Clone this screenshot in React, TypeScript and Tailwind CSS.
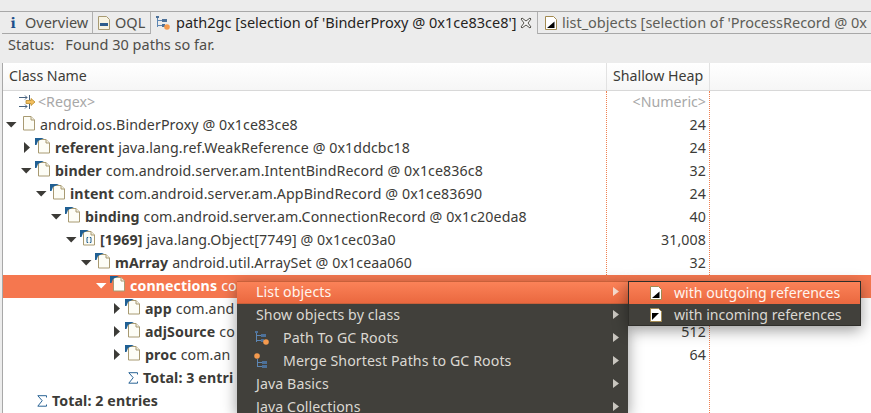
const font = { fontFamily: '"Noto Sans", sans-serif' };

type Kind = 'ref' | 'plain' | 'array' | 'sum';

function Doc({ kind }: { kind: Kind }) {
  return (
    <svg width="16" height="16" viewBox="0 0 16 16" className="shrink-0">
      <path d="M3.5 1.5h7.5l3.5 3.5v10h-11z" fill="#fdfdf6" stroke="#a89a72" strokeWidth="1" />
      <path d="M11 1.5V5h3.5" fill="#f2efe0" stroke="#a89a72" strokeWidth="1" />
      {kind === 'ref' && <path d="M0 0h9L3 3 1.5 7H0z" fill="#1f5f93" />}
      {kind === 'array' && (
        <>
          <path d="M0 0h9L3 3 1.5 7H0z" fill="#1f5f93" />
          <path d="M7 7.5v5M7 7.5h1.2M7 12.5h1.2M11 7.5v5M11 7.5H9.8M11 12.5H9.8" stroke="#1f5f93" strokeWidth="1" fill="none" />
        </>
      )}
    </svg>
  );
}

function Twisty({ open, white }: { open?: boolean; white?: boolean }) {
  return (
    <svg width="11" height="11" viewBox="0 0 11 11" className="shrink-0">
      {open ? (
        <path d="M0 3h10.5L5.2 8.5z" fill={white ? '#fff' : '#3c3b37'} />
      ) : (
        <path d="M3 0l6 5.5L3 11z" fill="#3c3b37" />
      )}
    </svg>
  );
}

function Sigma() {
  return (
    <svg width="10" height="12" viewBox="0 0 10 12" className="shrink-0">
      <path d="M9.5 2.5V.7H.8l4.4 5-4.4 5.5h8.7V9.5" fill="none" stroke="#2a6496" strokeWidth="1" />
    </svg>
  );
}

function Row({
  indent, open, leaf, kind, bold, rest, value, selected, clip,
}: {
  indent: number; open?: boolean; leaf?: boolean; kind: Kind; bold: string; rest?: string; value?: string; selected?: boolean; clip?: boolean;
}) {
  return (
    <div className={`flex h-[23px] items-center pb-[2px] text-[14.2px] tracking-[0.1px] ${selected ? 'bg-[#f5774f] text-white' : 'text-[#3c3b37]'}`}>
      <div className="flex w-[604px] shrink-0">
        <div className={`flex items-center overflow-hidden whitespace-nowrap ${clip ? 'w-[234px]' : 'w-[604px]'}`} style={{ paddingLeft: indent }}>
          {!leaf && <Twisty open={open} white={selected} />}
          {kind === 'sum' ? (
            <span className="ml-[3px] mr-[5px]"><Sigma /></span>
          ) : (
            <span className="-mt-[3px] ml-[3px] mr-[4px]"><Doc kind={kind} /></span>
          )}
          {bold && <span className="mr-[4px] font-bold">{bold}</span>}
          {rest && <span>{rest}</span>}
        </div>
      </div>
      <div className="w-[103px] pr-[4px] text-right">{value}</div>
    </div>
  );
}

function Tab({ icon, label, w, active, close, pad, gap }: { icon: React.ReactNode; label: string; w: string; active?: boolean; close?: boolean; pad: string; gap: string }) {
  return (
    <div className={`${w} ${pad} ${gap} flex h-[22px] shrink-0 items-center overflow-hidden whitespace-nowrap border-r border-[#b0b0b0] text-[14.5px] ${active ? 'text-[#26241e]' : 'border-b border-b-[#a8a8a8]'}`}>
      {icon}
      <span>{label}</span>
      {close && (
        <svg width="12" height="12" viewBox="0 0 12 12" className="shrink-0">
          <path d="M2 1l4 3 4-3 1 1-3 4 3 4-1 1-4-3-4 3-1-1 3-4-3-4z" fill="#f7f7f7" stroke="#55534d" strokeWidth="1" />
        </svg>
      )}
    </div>
  );
}

function TreeIcon({ merge }: { merge?: boolean }) {
  return (
    <svg width="16" height="16" viewBox="0 0 16 16" className="shrink-0">
      <path d={merge ? 'M3.5 6v8M3.5 9.5H8M3.5 13.5H8' : 'M2.5 2v10M2.5 5.5H8M2.5 10.5H8'} stroke="#5d86b3" strokeWidth="1" fill="none" />
      <path d={merge ? 'M8 8h5v3H8zM8 12h5v3H8z' : 'M1 1h3v2H1zM7 4h5v3H7zM7 9h3v3H7z'} fill="#4d7199" />
      <circle cx={merge ? 3 : 12} cy={merge ? 3 : 12} r="2.8" fill="#f49a4e" />
    </svg>
  );
}

function MenuDocIcon({ incoming }: { incoming?: boolean }) {
  return (
    <svg width="12" height="14" viewBox="0 0 12 14" className="shrink-0">
      <path d="M.5.5h8l3 3v10H.5z" fill="#fff" stroke="#a38a50" strokeWidth="1" />
      <path d={incoming ? 'M2 5h7L2 12z' : 'M9.5 5.5v6.5H2z'} fill="#000" />
    </svg>
  );
}

function MenuItem({ label, icon, active }: { label: string; icon?: React.ReactNode; active?: boolean }) {
  return (
    <div className={`flex h-[23px] shrink-0 items-center whitespace-nowrap pb-[2px] pl-[19px] text-[14.2px] tracking-[0.08px] ${active ? 'border-y border-[#c8603a] bg-gradient-to-b from-[#fb8258] to-[#ea683f] text-[#fff4ee]' : 'text-[#dbd8d2]'}`}>
      {icon && <span className="-ml-[2px] mr-[13px] flex w-[16px]">{icon}</span>}
      <span>{label}</span>
      <svg width="6" height="9" viewBox="0 0 6 9" className="ml-auto mr-[9px] shrink-0">
        <path d="M0 0l6 4.5L0 9z" fill={active ? '#f6d9cc' : '#c9c6bf'} />
      </svg>
    </div>
  );
}

function SubItem({ label, active, incoming }: { label: string; active?: boolean; incoming?: boolean }) {
  return (
    <div className={`flex h-[22px] items-center whitespace-nowrap pb-[1px] pl-[21px] text-[14.1px] ${active ? 'bg-gradient-to-b from-[#fb8258] to-[#ea683f] text-[#fff4ee]' : 'text-[#dbd8d2]'}`}>
      <span className="mr-[12px] flex"><MenuDocIcon incoming={incoming} /></span>
      <span>{label}</span>
    </div>
  );
}

export default function App() {
  return (
    <div className="relative h-[413px] w-[871px] overflow-hidden bg-[#ececec]" style={font}>
      <div className="box-content h-[11px] border-b border-[#a8a8a8]" />
      <div className="flex h-[22px] items-start pl-[2px] text-[#4f4e49]">
        <Tab w="w-[91px]" pad="pl-[4px]" gap="gap-[5px]" label="Overview" icon={<span className="w-[14px] text-center font-serif text-[17px] font-bold leading-none text-[#1e4f8b]">i</span>} />
        <Tab w="w-[58px]" pad="pl-[3px]" gap="gap-[3px]" label="OQL" icon={
          <svg width="16" height="16" viewBox="0 0 16 16" className="shrink-0">
            <path d="M2.5 1.5h8l3 3v10h-11z" fill="#f7f3e2" stroke="#a89a72" />
            <path d="M4 8h8v3H4z" fill="#2d5c8c" />
          </svg>} />
        <Tab w="w-[387px]" active close pad="pl-[4px]" gap="gap-[3px]" label="path2gc [selection of 'BinderProxy @ 0x1ce83ce8']" icon={<span className="mr-[2px] flex"><TreeIcon /></span>} />
        <div className="flex h-[22px] min-w-0 flex-1 items-center gap-[5px] whitespace-nowrap border-b border-[#a8a8a8] pl-[7px] text-[14.5px] text-[#5e5e58]">
          <MenuDocIcon />
          <span>list_objects [selection of 'ProcessRecord @ 0x</span>
        </div>
      </div>
      <div className="flex h-[29px] items-start pl-[8px] text-[14.5px] text-[#4f4e49]">
        <span className="mr-[11px]">Status:</span>
        <span>Found 30 paths so far.</span>
      </div>
      <div className="ml-[2px] border-l border-[#a8a8a8] bg-white">
        <div className="flex h-[28px] items-center border-b border-[#d8d8d8] bg-gradient-to-b from-white to-[#f6f6f6] text-[14.2px] text-[#3c3b37]">
          <div className="w-[603px] pb-[2px] pl-[6px]">Class Name</div>
          <div className="flex h-full w-[104px] items-center border-x border-[#e2e2e2] pb-[2px] pl-[6px]">Shallow Heap</div>
        </div>
        <div className="relative">
          <div className="pointer-events-none absolute bottom-0 left-[603px] top-0 w-[104px] border-x border-dotted border-[#f08050]" />
          <div className="flex h-[23px] items-center pb-[2px] text-[14.2px] text-[#a8a8a8]">
            <div className="flex w-[604px] items-center pl-[16px]">
              <svg width="17" height="16" viewBox="0 0 17 16" className="mr-[2px] shrink-0">
                <path d="M0 3.5h8M0 12.5h8M10.5 1v5M10.5 10v5M6 1.5l2 2-2 2M6 10.5l2 2-2 2" stroke="#47627f" fill="none" />
                <path d="M7 6.5h5V4.5l4 3.5-4 3.5v-2H7z" fill="#f3bf5f" stroke="#b98a2a" strokeWidth=".8" />
              </svg>
              <span>&lt;Regex&gt;</span>
            </div>
            <div className="w-[103px] pr-[4px] text-right">&lt;Numeric&gt;</div>
          </div>
          <Row indent={3} open kind="plain" bold="" rest="android.os.BinderProxy @ 0x1ce83ce8" value="24" />
          <Row indent={18} kind="ref" bold="referent" rest="java.lang.ref.WeakReference @ 0x1ddcbc18" value="24" />
          <Row indent={18} open kind="ref" bold="binder" rest="com.android.server.am.IntentBindRecord @ 0x1ce836c8" value="32" />
          <Row indent={33} open kind="ref" bold="intent" rest="com.android.server.am.AppBindRecord @ 0x1ce83690" value="24" />
          <Row indent={48} open kind="ref" bold="binding" rest="com.android.server.am.ConnectionRecord @ 0x1c20eda8" value="40" />
          <Row indent={63} open kind="array" bold="[1969]" rest="java.lang.Object[7749] @ 0x1cec03a0" value="31,008" />
          <Row indent={78} open kind="ref" bold="mArray" rest="android.util.ArraySet @ 0x1ceaa060" value="32" />
          <Row indent={93} open selected clip kind="ref" bold="connections" rest="co" />
          <Row indent={108} clip kind="ref" bold="app" rest="com.and" />
          <Row indent={108} clip kind="ref" bold="adjSource" rest="co" value="512" />
          <Row indent={108} clip kind="ref" bold="proc" rest="com.an" value="64" />
          <Row indent={122} clip leaf kind="sum" bold="Total: 3 entri" />
          <Row indent={31} leaf kind="sum" bold="Total: 2 entries" />
        </div>
      </div>

      <div className="absolute left-[237px] top-[281px] flex h-[132px] w-[391px] flex-col overflow-hidden bg-[#41403b] shadow-[0_4px_14px_rgba(0,0,0,0.4)]">
        <MenuItem label="List objects" active />
        <MenuItem label="Show objects by class" />
        <MenuItem label="Path To GC Roots" icon={<TreeIcon />} />
        <MenuItem label="Merge Shortest Paths to GC Roots" icon={<TreeIcon merge />} />
        <MenuItem label="Java Basics" />
        <MenuItem label="Java Collections" />
      </div>

      <div className="absolute left-[628px] top-[281px] flex h-[45px] w-[233px] flex-col border border-[#2f2e2a] bg-[#41403b] shadow-[0_4px_14px_rgba(0,0,0,0.4)]">
        <SubItem label="with outgoing references" active />
        <SubItem label="with incoming references" incoming />
      </div>
    </div>
  );
}
